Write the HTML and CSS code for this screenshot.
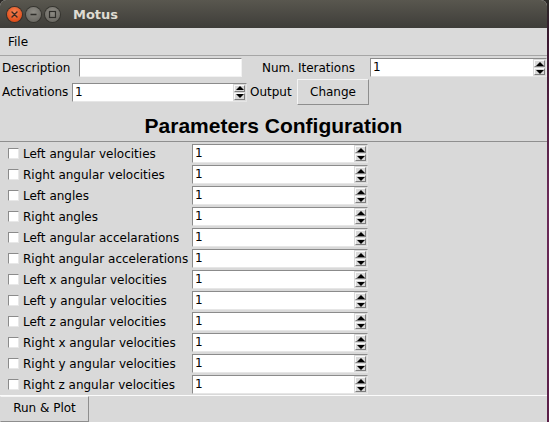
FILE: index.html
```html
<!DOCTYPE html>
<html>
<head>
<meta charset="utf-8">
<link rel="stylesheet" href="styles.css">
</head>
<body>
<div class="window">
  <div class="titlebar">
    <span class="wbtn close"><svg width="15" height="15" viewBox="0 0 15 15"><path d="M5 5 L10 10 M10 5 L5 10" stroke="#3a2a22" stroke-width="1.4" stroke-linecap="round"/></svg></span>
    <span class="wbtn min"><svg width="15" height="15" viewBox="0 0 15 15"><path d="M4.5 7.5 H10.5" stroke="#2f2e2a" stroke-width="1.4"/></svg></span>
    <span class="wbtn max"><svg width="15" height="15" viewBox="0 0 15 15"><rect x="4.5" y="4.5" width="6" height="6" fill="none" stroke="#2f2e2a" stroke-width="1.2"/></svg></span>
    <span class="wtitle">Motus</span>
  </div>
  <div class="menubar"><span class="menu">File</span></div>

  <div class="form">
    <div class="frow r1">
      <span class="lbl l-desc">Description</span>
      <div class="entry e-desc"></div>
      <span class="lbl l-iter">Num. Iterations</span>
      <div class="spin s-iter"><span class="val">1</span><span class="arrows"><span class="arr up"></span><span class="arr down"></span></span></div>
    </div>
    <div class="frow r2">
      <span class="lbl l-act">Activations</span>
      <div class="spin s-act"><span class="val">1</span><span class="arrows"><span class="arr up"></span><span class="arr down"></span></span></div>
      <span class="lbl l-out">Output</span>
      <button class="btn change">Change</button>
    </div>
  </div>

  <div class="header">Parameters Configuration</div>

  <div class="params">
    <div class="prow"><span class="chk"></span><span class="plbl">Left angular velocities</span><div class="spin s-p"><span class="val">1</span><span class="arrows"><span class="arr up"></span><span class="arr down"></span></span></div></div>
    <div class="prow"><span class="chk"></span><span class="plbl">Right angular velocities</span><div class="spin s-p"><span class="val">1</span><span class="arrows"><span class="arr up"></span><span class="arr down"></span></span></div></div>
    <div class="prow"><span class="chk"></span><span class="plbl">Left angles</span><div class="spin s-p"><span class="val">1</span><span class="arrows"><span class="arr up"></span><span class="arr down"></span></span></div></div>
    <div class="prow"><span class="chk"></span><span class="plbl">Right angles</span><div class="spin s-p"><span class="val">1</span><span class="arrows"><span class="arr up"></span><span class="arr down"></span></span></div></div>
    <div class="prow"><span class="chk"></span><span class="plbl">Left angular accelarations</span><div class="spin s-p"><span class="val">1</span><span class="arrows"><span class="arr up"></span><span class="arr down"></span></span></div></div>
    <div class="prow"><span class="chk"></span><span class="plbl">Right angular accelerations</span><div class="spin s-p"><span class="val">1</span><span class="arrows"><span class="arr up"></span><span class="arr down"></span></span></div></div>
    <div class="prow"><span class="chk"></span><span class="plbl">Left x angular velocities</span><div class="spin s-p"><span class="val">1</span><span class="arrows"><span class="arr up"></span><span class="arr down"></span></span></div></div>
    <div class="prow"><span class="chk"></span><span class="plbl">Left y angular velocities</span><div class="spin s-p"><span class="val">1</span><span class="arrows"><span class="arr up"></span><span class="arr down"></span></span></div></div>
    <div class="prow"><span class="chk"></span><span class="plbl">Left z angular velocities</span><div class="spin s-p"><span class="val">1</span><span class="arrows"><span class="arr up"></span><span class="arr down"></span></span></div></div>
    <div class="prow"><span class="chk"></span><span class="plbl">Right x angular velocities</span><div class="spin s-p"><span class="val">1</span><span class="arrows"><span class="arr up"></span><span class="arr down"></span></span></div></div>
    <div class="prow"><span class="chk"></span><span class="plbl">Right y angular velocities</span><div class="spin s-p"><span class="val">1</span><span class="arrows"><span class="arr up"></span><span class="arr down"></span></span></div></div>
    <div class="prow"><span class="chk"></span><span class="plbl">Right z angular velocities</span><div class="spin s-p"><span class="val">1</span><span class="arrows"><span class="arr up"></span><span class="arr down"></span></span></div></div>
  </div>

  <div class="bottom">
    <button class="btn run">Run &amp; Plot</button>
  </div>
</div>
</body>
</html>
```

FILE: styles.css
```css
* { box-sizing: border-box; }
html, body { margin: 0; padding: 0; }
body {
  width: 549px;
  height: 422px;
  overflow: hidden;
  background: linear-gradient(#2b2a27 0, #3a1730 40px, #6b2a58 200px, #5a1f48 422px);
  font-family: "DejaVu Sans", sans-serif;
  font-size: 12px;
  color: #000;
}
.window {
  width: 547px;
  height: 422px;
  background: #d9d9d9;
  border-radius: 6px 6px 0 0;
  overflow: hidden;
  display: flex;
  flex-direction: column;
}
.titlebar {
  height: 28px;
  flex: none;
  background: linear-gradient(#59574f, #3e3d39);
  display: flex;
  align-items: center;
  padding-left: 7px;
}
.wbtn {
  width: 15px;
  height: 15px;
  border-radius: 50%;
  display: block;
  margin-right: 4px;
}
.wbtn svg { display: block; }
.close {
  background: radial-gradient(circle at 50% 35%, #f58455, #e2501c 70%, #c6410f);
  box-shadow: 0 0 0 1px #3a2f28;
}
.min, .max {
  background: radial-gradient(circle at 50% 35%, #8e8c85, #6f6d67 70%, #5e5c57);
  box-shadow: 0 0 0 1px #35342f;
}
.max { margin-right: 0; }
.wtitle {
  margin-left: 13px;
  font-family: "DejaVu Sans", sans-serif;
  font-weight: bold;
  font-size: 13px;
  color: #dfdbd2;
}
.menubar {
  height: 28px;
  flex: none;
  background: #dadada;
  border-bottom: 1px solid #a6a6a6;
  display: flex;
  align-items: center;
  padding-left: 8px;
}
.menu { font-size: 12px; }

.form { padding-top: 2px; flex: none; }
.frow { display: flex; align-items: center; }
.r1 { height: 19px; }
.r2 { height: 26px; margin-top: 2px; }
.lbl { white-space: nowrap; }
.l-desc { width: 79px; padding-left: 2px; }
.l-iter { width: 108px; margin-left: 20px; }
.l-act { width: 72px; padding-left: 2px; }
.l-out { width: 47px; margin-left: 3px; }

.entry {
  height: 19px;
  background: #fff;
  border: 1px solid;
  border-color: #8b8b8b #f2f2f2 #f2f2f2 #8b8b8b;
}
.e-desc { width: 163px; }

.spin {
  display: flex;
  height: 19px;
  background: #fff;
  border: 1px solid;
  border-color: #8b8b8b #e6e6e6 #e6e6e6 #8b8b8b;
}
.s-iter { width: 177px; }
.s-act { width: 175px; }
.s-p { width: 176px; }
.val {
  flex: 1;
  padding-left: 2px;
  line-height: 17px;
  font-size: 12px;
}
.arrows {
  width: 13px;
  background: #d9d9d9;
  display: flex;
  flex-direction: column;
  justify-content: center;
  gap: 1px;
  padding: 0 1px;
}
.arr {
  height: 7px;
  display: flex;
  align-items: center;
  justify-content: center;
  background: #d9d9d9;
  border: 1px solid;
  border-color: #fafafa #7d7d7d #7d7d7d #fafafa;
}
.arr::before {
  content: "";
  width: 0;
  height: 0;
  border-left: 4px solid transparent;
  border-right: 4px solid transparent;
}
.up::before { border-bottom: 4px solid #000; }
.down::before { border-top: 4px solid #000; }

.btn {
  font-family: "DejaVu Sans", sans-serif;
  font-size: 12px;
  color: #000;
  background: #d9d9d9;
  border: 1px solid;
  border-color: #f4f4f4 #8e8e8e #8e8e8e #f4f4f4;
  padding: 0;
  margin: 0;
}
.change { width: 72px; height: 26px; }

.header {
  flex: none;
  height: 37px;
  padding-top: 1px;
  text-align: center;
  font-family: "Liberation Sans", Arial, sans-serif;
  font-weight: bold;
  font-size: 21px;
  line-height: 39px;
  border-bottom: 1px solid #8f8f8f;
}

.params {
  flex: none;
  padding-top: 1px;
  border-bottom: 1px solid #fbfbfb;
}
.prow {
  height: 21px;
  display: flex;
  align-items: center;
}
.chk {
  width: 11px;
  height: 11px;
  margin-left: 8px;
  background: #fff;
  border: 1px solid;
  border-color: #8b8b8b #e8e8e8 #e8e8e8 #8b8b8b;
}
.plbl {
  width: 169px;
  margin-left: 4px;
  white-space: nowrap;
}

.bottom {
  flex: 1;
  display: flex;
}
.run {
  width: 89px;
  border-color: #f4f4f4 #8e8e8e #8e8e8e #d9d9d9;
  padding-bottom: 2px;
}
```
